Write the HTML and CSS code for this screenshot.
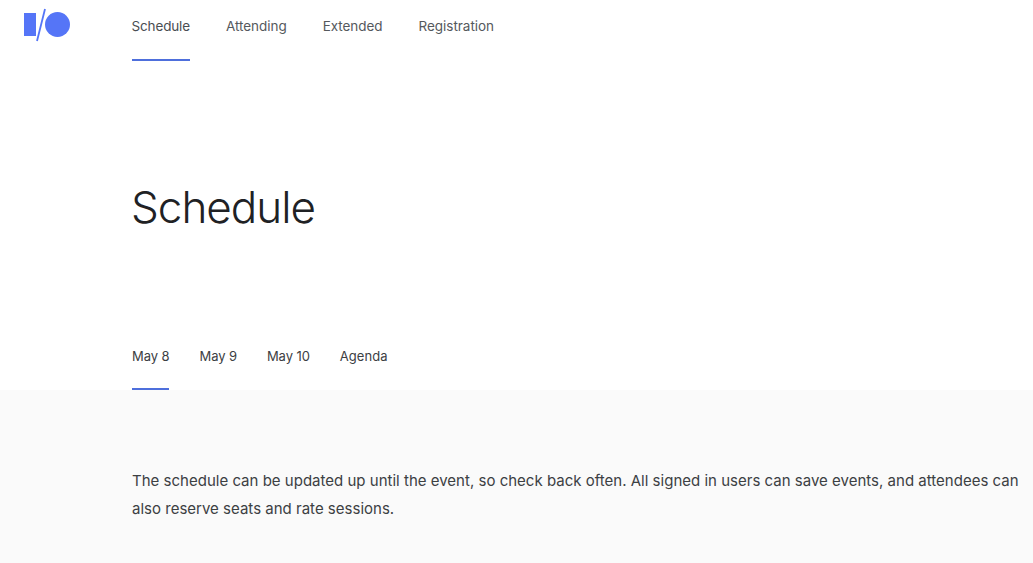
FILE: index.html
```html
<!DOCTYPE html>
<html lang="en">
<head>
  <meta charset="UTF-8">
  <title>Schedule</title>
  <link rel="stylesheet" href="styles.css">
</head>
<body>

  <header class="topbar">
    <svg class="logo" width="46" height="34" viewBox="0 0 46 34">
      <rect x="0" y="5" width="12" height="23" fill="#5575f7"/>
      <path d="M21 1 L13 33" stroke="#5575f7" stroke-width="1.8" fill="none"/>
      <circle cx="33.5" cy="16.5" r="12.5" fill="#5575f7"/>
    </svg>
    <nav class="mainnav">
      <a class="active" href="#">Schedule</a>
      <a href="#">Attending</a>
      <a href="#">Extended</a>
      <a href="#">Registration</a>
    </nav>
  </header>

  <h1 class="title">Schedule</h1>

  <nav class="daytabs">
    <a class="active" href="#">May 8</a>
    <a href="#">May 9</a>
    <a href="#">May 10</a>
    <a href="#">Agenda</a>
  </nav>

  <section class="intro">
    <p>The schedule can be updated up until the event, so check back often. All signed in users can save events, and attendees can also reserve seats and rate sessions.</p>
  </section>

</body>
</html>
```

FILE: styles.css
```css
html, body { height: 100%; }
body { margin: 0; background: #fff; color: #202124; font-family: "Inter", "Noto Sans", sans-serif; overflow: hidden; display: flex; flex-direction: column; }
a { color: inherit; text-decoration: none; }

.topbar { display: flex; height: 61px; padding-left: 24px; }
.logo { margin-top: 8px; margin-right: 61.5px; }
.mainnav { display: flex; gap: 36px; }
.mainnav a { font-size: 13.5px; letter-spacing: -0.04px; color: #55595d; line-height: 53px; height: 59px; border-bottom: 2px solid transparent; }
.mainnav a:first-child { letter-spacing: -0.15px; }
.mainnav a.active { color: #4a4e52; border-bottom-color: #4e6fdc; }

.title { margin: 115px 0 0 131px; font-size: 44px; font-weight: 300; line-height: 62px; color: #202124; letter-spacing: -1px; }

.daytabs { display: flex; gap: 30px; margin-top: 86px; padding-left: 132px; height: 66px; box-sizing: border-box; }
.daytabs a { font-size: 13px; letter-spacing: -0.08px; color: #3c4043; line-height: 64px; height: 64px; border-bottom: 2px solid transparent; }
.daytabs a:last-child { letter-spacing: 0.05px; }
.daytabs a.active { border-bottom-color: #4e6fdc; }

.intro { flex: 1; background: #fafafa; padding: 76px 0 0 132px; }
.intro p { margin: 0; padding-top: 1px; font-size: 15px; letter-spacing: 0.01px; line-height: 28px; color: #3c4043; }
```
